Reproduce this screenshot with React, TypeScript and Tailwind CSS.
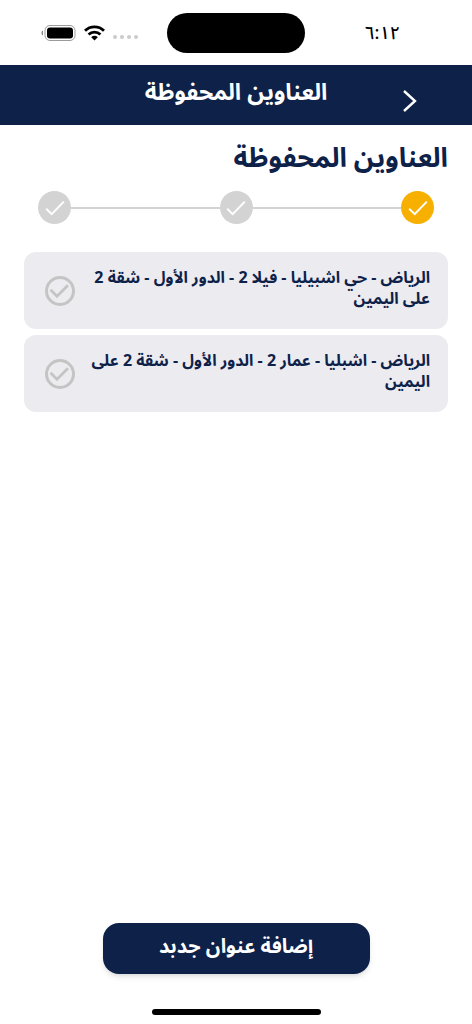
import { useState } from "react";

const addresses = [
  { id: "villa", text: "الرياض - حي اشبيليا - فيلا 2 - الدور الأول - شقة 2 على اليمين" },
  { id: "building", text: "الرياض - اشبليا - عمار 2 - الدور الأول - شقة 2 على اليمين" },
];

function StatusBar() {
  return (
    <div className="grid h-[65px] grid-cols-[1fr_138px_1fr] items-center">
      <div className="ps-[72px] text-lg leading-6 font-medium text-black">٦:١٢</div>
      <div className="h-10 rounded-full bg-black" />
      <div dir="ltr" className="flex items-center gap-2 ps-[41px]">
        <svg width="35" height="16" viewBox="0 0 35 16" aria-hidden="true">
          <path d="M2 5.5C.7 6 .5 7 .5 8s.2 2 1.5 2.500z" fill="#8a8a8a" />
          <rect x="4" y=".5" width="30" height="15" rx="5" fill="none" stroke="#9a9a9a" />
          <rect x="6" y="2.500" width="26" height="11" rx="3" fill="#000" />
        </svg>
        <svg width="21" height="16" viewBox="0 0 21 16" fill="none" stroke="#000" strokeWidth="2.900" aria-hidden="true">
          <path d="M1 5.800a13.500 13.500 0 0 1 19 0" />
          <path d="M4.600 9.500a8.400 8.400 0 0 1 11.800 0" />
          <path d="M10.500 15.500L7.200 12.200a4.700 4.700 0 0 1 6.600 0z" fill="#000" stroke="none" />
        </svg>
        <div className="flex gap-[3px] pt-2">
          <span className="size-[4px] rounded-full bg-[#cbcbcb]" />
          <span className="size-[4px] rounded-full bg-[#cbcbcb]" />
          <span className="size-[4px] rounded-full bg-[#cbcbcb]" />
          <span className="size-[4px] rounded-full bg-[#cbcbcb]" />
        </div>
      </div>
    </div>
  );
}

function Step({ active = false }: { active?: boolean }) {
  return (
    <span
      className={`flex size-[33px] shrink-0 items-center justify-center rounded-full ${
        active ? "bg-[#f8b000]" : "bg-[#d3d3d3]"
      }`}
    >
      <svg width="20" height="16" viewBox="0 0 20 16" fill="none" stroke="#fff" strokeWidth="2" aria-hidden="true">
        <path d="M1.200 8.800L6.700 14.200 18.800 1.600" />
      </svg>
    </span>
  );
}

export default function SavedAddressesPage() {
  const [selected, setSelected] = useState("");

  return (
    <div
      dir="rtl"
      lang="ar"
      className="flex min-h-screen flex-col bg-white font-['Noto_Sans_Arabic','DejaVu_Sans',sans-serif] text-[#0d2149]"
    >
      <StatusBar />

      {/* Header */}
      <header className="grid h-[60px] grid-cols-[48px_1fr_48px] items-center bg-[#0d2149] px-[38px] text-white">
        <button type="button" aria-label="رجوع" className="flex justify-center pt-3">
          <svg width="14" height="22" viewBox="0 0 14 22" fill="none" stroke="currentColor" strokeWidth="2.400" aria-hidden="true">
            <path d="M1 1L12 11 1 21" />
          </svg>
        </button>
        <p className="pb-1 text-center text-[23px] leading-8 font-bold whitespace-nowrap">العناوين المحفوظة</p>
      </header>

      <main className="flex grow flex-col px-6 pt-[18px]">
        <h1 className="text-[27px] leading-8 font-bold">العناوين المحفوظة</h1>

        {/* Steps */}
        <div className="mt-4 flex items-center px-[14px]">
          <Step active />
          <span className="h-[2px] grow bg-[#d3d3d3]" />
          <Step />
          <span className="h-[2px] grow bg-[#d3d3d3]" />
          <Step />
        </div>

        {/* Addresses */}
        <div className="mt-7 flex flex-col gap-[6px]">
          {addresses.map((address) => (
            <label
              key={address.id}
              htmlFor={address.id}
              className="flex min-h-[77px] items-center gap-[13px] rounded-xl bg-[#ecebf0] px-[18px]"
            >
              <span className="grow self-start pt-4 text-base leading-[21px] font-bold">{address.text}</span>
              <span className="grid size-9 shrink-0 place-items-center">
                <input
                  id={address.id}
                  type="radio"
                  name="address"
                  checked={selected === address.id}
                  onChange={() => setSelected(address.id)}
                  className="peer col-start-1 row-start-1 size-[30px] appearance-none rounded-full border-[3px] border-[#c4c4c4] checked:border-[#f8b000]"
                />
                <svg
                  viewBox="0 0 24 24"
                  className="pointer-events-none col-start-1 row-start-1 size-9 text-[#c4c4c4] peer-checked:text-[#f8b000]"
                  fill="none"
                  stroke="currentColor"
                  strokeWidth="1.800"
                  aria-hidden="true"
                >
                  <path d="M5.700 11.200L10 15.500 17.300 8.200" />
                </svg>
              </span>
            </label>
          ))}
        </div>
      </main>

      <footer className="flex flex-col items-center px-6 pb-[9px]">
        <button
          type="button"
          className="h-[51px] w-full max-w-[267px] rounded-2xl bg-[#0d2149] pb-1 text-xl font-bold text-white shadow-md"
        >
          إضافة عنوان جدبد
        </button>
        <div className="mt-[35px] h-[6px] w-[169px] rounded-full bg-black" />
      </footer>
    </div>
  );
}
